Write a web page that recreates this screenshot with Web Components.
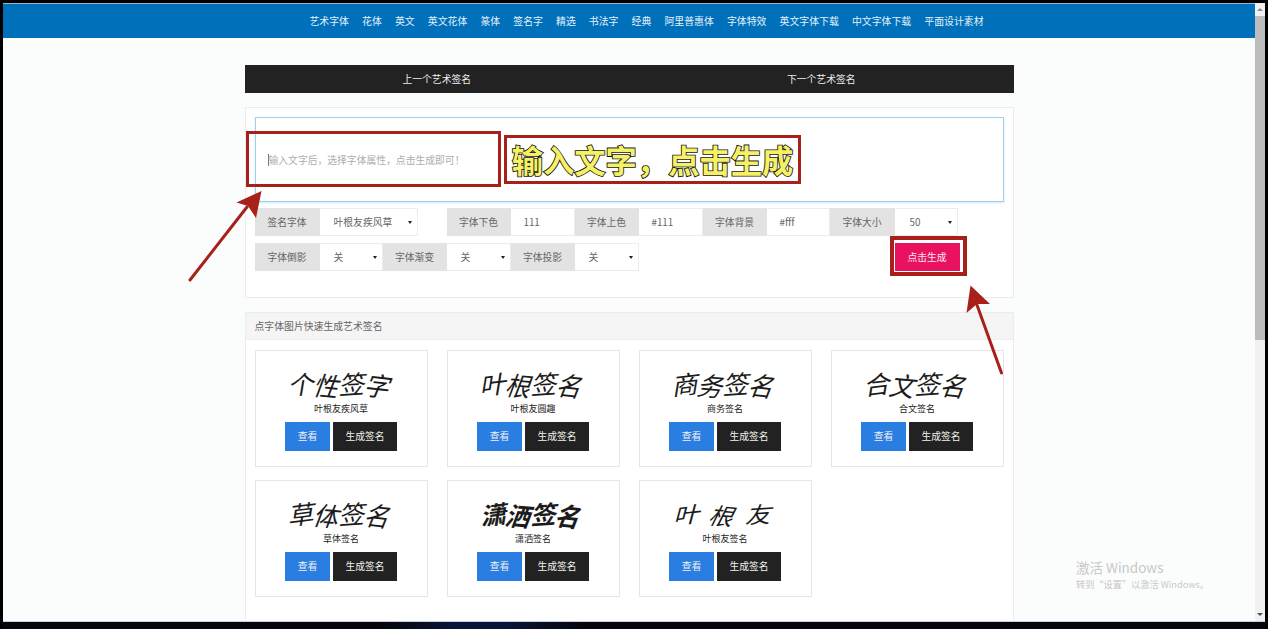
<!DOCTYPE html>
<html lang="zh-CN">
<head>
<meta charset="utf-8">
<title>艺术签名</title>
<style>
html,body{margin:0;padding:0;height:629px;overflow:hidden;background:#000;font-family:"Noto Sans CJK SC","Noto Sans",sans-serif}
</style>
</head>
<body>
<sig-window>
  <sig-topnav>
    <a>艺术字体</a><a>花体</a><a>英文</a><a>英文花体</a><a>篆体</a><a>签名字</a><a>精选</a><a>书法字</a><a>经典</a><a>阿里普惠体</a><a>字体特效</a><a>英文字体下载</a><a>中文字体下载</a><a>平面设计素材</a>
  </sig-topnav>
  <sig-page>
    <sig-pager prev="上一个艺术签名" next="下一个艺术签名"></sig-pager>
    <sig-form>
      <sig-field slot="r1" label="签名字体" value="叶根友疾风草" select vw="98" pad="14" style="margin-right:29px"></sig-field>
      <sig-field slot="r1" label="字体下色" value="111" lw="64" vw="64" pad="13"></sig-field>
      <sig-field slot="r1" label="字体上色" value="#111" lw="64" vw="64" pad="13"></sig-field>
      <sig-field slot="r1" label="字体背景" value="#fff" lw="64" vw="63" pad="13"></sig-field>
      <sig-field slot="r1" label="字体大小" value="50" lw="65" vw="63" select pad="15"></sig-field>
      <sig-field slot="r2" label="字体倒影" value="关" vw="63" select pad="14"></sig-field>
      <sig-field slot="r2" label="字体渐变" value="关" lw="64" vw="64" select pad="14"></sig-field>
      <sig-field slot="r2" label="字体投影" value="关" lw="64" vw="64" select pad="14"></sig-field>
      <sig-generate slot="r2">点击生成</sig-generate>
    </sig-form>
    <sig-gallery title="点字体图片快速生成艺术签名">
      <sig-card art="个性签字" name="叶根友疾风草"></sig-card>
      <sig-card art="叶根签名" name="叶根友圆趣"></sig-card>
      <sig-card art="商务签名" name="商务签名"></sig-card>
      <sig-card art="合文签名" name="合文签名"></sig-card>
      <sig-card art="草体签名" name="草体签名"></sig-card>
      <sig-card art="潇洒签名" name="潇洒签名" tone="heavy"></sig-card>
      <sig-card art="叶根友" name="叶根友签名" tone="wide"></sig-card>
    </sig-gallery>
  </sig-page>
  <sig-scrollbar slot="bar"></sig-scrollbar>
  <sig-notes slot="over"></sig-notes>
  <sig-watermark slot="over"></sig-watermark>
</sig-window>
<script>
function make(name, css, html){
  customElements.define(name, class extends HTMLElement{
    constructor(){super();this.attachShadow({mode:'open'});}
    connectedCallback(){
      const a=n=>this.getAttribute(n);
      this.shadowRoot.innerHTML='<style>'+css+'</style>'+(typeof html==='function'?html(a,this):html);
    }
  });
}
const FONT='"Noto Sans CJK SC","Noto Sans",sans-serif';

make('sig-window',`
  :host{display:block;position:relative;width:1268px;height:629px;box-sizing:border-box;padding:3px 3px 7px 3px;background:linear-gradient(90deg,#04050c 0,#04050c 30%,#0a1436 36%,#0a1436 40%,#04050c 46%);overflow:hidden;font-family:${FONT}}
  .top{position:absolute;left:0;right:0;top:0;height:3px;background:#000}
  .l{position:absolute;left:0;top:0;bottom:0;width:3px;background:#000}
  .r{position:absolute;right:0;top:0;bottom:0;width:3px;background:#000}
  .frame{display:flex;height:100%;background:#fbfdfd;border-bottom:1px solid #c9cfdc;box-sizing:border-box}
  .main{flex:1;min-width:0;overflow:hidden;border-top:1px solid #9db4c6}
`,`<div class="top"></div><div class="l"></div><div class="r"></div>
   <div class="frame"><div class="main"><slot></slot></div><slot name="bar"></slot></div><slot name="over"></slot>`);

make('sig-topnav',`
  :host{display:flex;justify-content:center;align-items:center;gap:13.1px;height:34px;background:#0070bb;padding-left:35px;box-sizing:border-box}
  ::slotted(a){color:#e6f1f9;font-size:9.9px;line-height:34px;white-space:nowrap}
`,`<slot></slot>`);

make('sig-page',`:host{display:block;width:769px;margin:27px auto 0}`,`<slot></slot>`);

make('sig-pager',`
  :host{display:flex;height:28px;background:#222;color:#eeeeee;font-size:9.8px}
  div{flex:1;display:flex;align-items:center;justify-content:center}
`,(a)=>`<div>${a('prev')}</div><div>${a('next')}</div>`);

make('sig-form',`
  :host{display:block;margin-top:14px;height:191px;box-sizing:border-box;background:#fff;border:1px solid #ececec;padding:9px}
  .ta{height:85px;box-sizing:border-box;border:1px solid #9ed0f0;box-shadow:0 1px 2px rgba(120,170,210,.3);display:flex;align-items:center;padding:0 0 0 12px;color:#adadad;font-size:9.8px}
  .caret{width:1px;height:12px;background:#777}
  .row{display:flex;height:28px;margin-top:6px}
  .row+.row{margin-top:7px}
`,`<div class="ta"><span class="caret"></span><span>输入文字后，选择字体属性，点击生成即可！</span></div>
   <div class="row"><slot name="r1"></slot></div><div class="row"><slot name="r2"></slot></div>`);

make('sig-field',`
  :host{display:flex;height:28px;font-size:9.8px;color:#666}
  .l{display:flex;align-items:center;justify-content:center;background:#e3e3e3;box-sizing:border-box}
  .v{position:relative;display:flex;align-items:center;background:#fff;box-sizing:border-box;border:1px solid #ececec;border-left:0;color:#666}
  .arrow{position:absolute;right:5px;top:12px;width:0;height:0;border:2px solid transparent;border-top:3px solid #222;border-bottom:0}
`,(a)=>{
  const lw=a('lw')||65, vw=a('vw')||64, pad=a('pad')||12;
  return `<div class="l" style="width:${lw}px">${a('label')}</div><div class="v" style="width:${vw}px;padding-left:${pad}px">${a('value')}${a('select')!==null?'<i class="arrow"></i>':''}</div>`;
});

make('sig-generate',`
  :host{display:flex;align-items:center;justify-content:center;width:65px;height:28px;margin-left:256px;background:#e91260;color:#fbe9f0;font-size:9.8px}
`,`<slot></slot>`);

make('sig-gallery',`
  :host{display:block;margin-top:14px;background:#fff;border:1px solid #ececec;border-bottom:0}
  h2{margin:0;height:27px;background:#f5f5f5;border-bottom:1px solid #efefef;box-sizing:border-box;padding:0 9px;display:flex;align-items:center;font-weight:400;font-size:9.85px;color:#666}
  .grid{display:grid;grid-template-columns:repeat(4,173px);column-gap:19px;row-gap:13.5px;padding:10px 9px 60px}
`,(a)=>`<h2>${a('title')}</h2><div class="grid"><slot></slot></div>`);

make('sig-card',`
  :host{display:flex;flex-direction:column;align-items:center;height:116.5px;box-sizing:border-box;border:1px solid #e6e6e6;background:#fff;padding-top:14px}
  .art{height:38px;display:flex;align-items:center;justify-content:center;gap:0;color:#1c1c1c;font-size:25.5px;line-height:38px;font-weight:400;transform:skewX(-16deg)}
  .art span{display:inline-block}
  .art.heavy{font-weight:700;font-size:25px}
  .art.wide{gap:11px;font-size:25px;transform:skewX(-22deg) scaleY(.9)}
  .cap{height:13px;line-height:13px;margin-top:-1px;font-size:9px;color:#222}
  .btns{display:flex;gap:3px;margin-top:7px}
  .btns div{height:28.5px;display:flex;align-items:center;justify-content:center;font-size:9.8px;color:#f0f0f0}
  .see{width:45px;background:#2a7de1}
  .gen{width:64px;background:#222}
`,(a)=>{
  const rot=[-7,5,-4,6];
  const glyphs=[...a('art')].map((c,i)=>`<span style="transform:rotate(${rot[i%4]}deg) translateY(${i%2?1:-1}px)">${c}</span>`).join('');
  return `<div class="art ${a('tone')||''}">${glyphs}</div><div class="cap">${a('name')}</div><div class="btns"><div class="see">查看</div><div class="gen">生成签名</div></div>`;
});

make('sig-scrollbar',`
  :host{display:flex;flex-direction:column;width:10px;background:#f1f1f1}
  .up,.down{height:13px;display:flex;align-items:center;justify-content:center;flex:none}
  .down{margin-top:auto}
  .up i,.down i{width:0;height:0;border:3px solid transparent}
  .up i{border-bottom:3px solid #8a8a8a;border-top:0}
  .down i{border-top:3px solid #505050;border-bottom:0}
  .thumb{height:324px;background:#bdbdbd;flex:none}
`,`<div class="up"><i></i></div><div class="thumb"></div><div class="down"><i></i></div>`);

make('sig-notes',`
  :host{position:absolute;left:0;top:0;width:1268px;height:629px;pointer-events:none;display:block}
  .box{position:absolute;box-sizing:border-box;border:3px solid #a8201a}
  .big{position:absolute;left:504px;top:135px;width:297px;height:49px;box-sizing:border-box;border:3px solid #a8201a;background:#fff;display:flex;align-items:center;justify-content:center;font-size:31.3px;font-weight:700;line-height:1;color:#f6f164;-webkit-text-stroke:1.7px #111;paint-order:stroke fill;white-space:nowrap}
  svg{position:absolute;left:0;top:0}
`,`<div class="box" style="left:246px;top:131px;width:255px;height:56px"></div>
   <div class="big">输入文字，点击生成</div>
   <div class="box" style="left:890px;top:236px;width:77px;height:40px;border-width:4px"></div>
   <svg width="1268" height="629" viewBox="0 0 1268 629">
     <path d="M190 280 L247 207" stroke="#a8201a" stroke-width="3" stroke-linecap="round" fill="none"/>
     <path d="M261.500 191 L256 218 L248 206 L236.500 202.500 Z" fill="#a8201a"/>
     <path d="M1001.500 373 L977 305" stroke="#a8201a" stroke-width="3" stroke-linecap="round" fill="none"/>
     <path d="M970.500 285.500 L990 304 L977 304 L966.500 313 Z" fill="#a8201a"/>
   </svg>`);

make('sig-watermark',`
  :host{position:absolute;left:1076px;top:558px;display:block;color:#c8c8c8;white-space:nowrap}
  .a{font-size:13.5px;line-height:19px}
  .b{font-size:9.2px;line-height:14px}
`,`<div class="a">激活 Windows</div><div class="b">转到“设置”以激活 Windows。</div>`);
</script>
</body>
</html>
